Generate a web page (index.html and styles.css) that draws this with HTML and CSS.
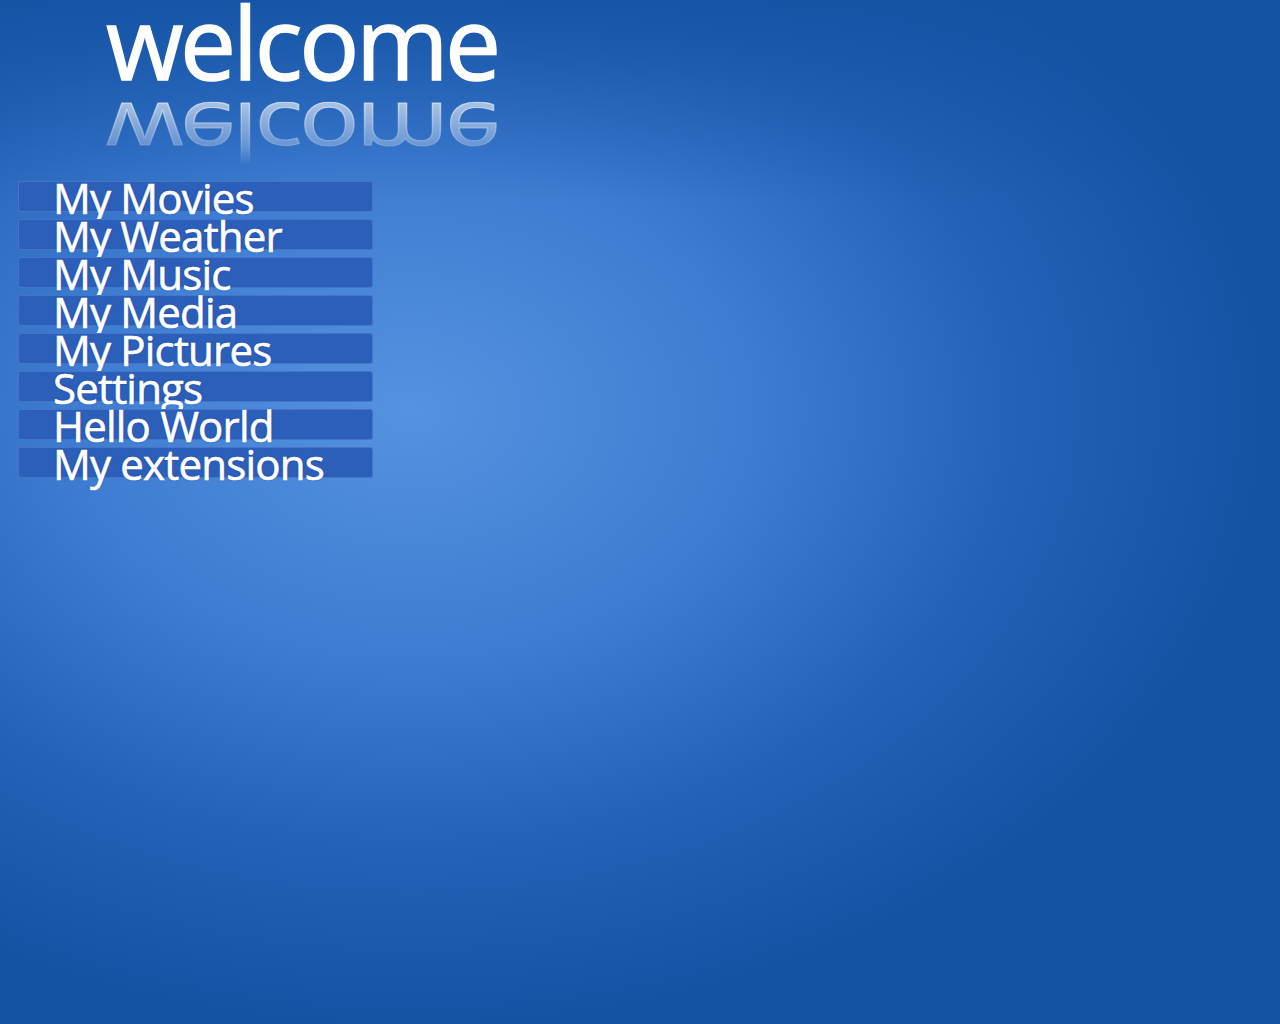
FILE: index.html
```html
<!DOCTYPE html>
<html>
<head>
<meta charset="utf-8">
<title>welcome</title>
<link rel="stylesheet" href="styles.css">
</head>
<body>
<div class="screen">
  <header class="title">
    <div class="welcome">welcome</div>
    <div class="reflection" aria-hidden="true">welcome</div>
  </header>
  <nav class="menu">
    <div class="item">My Movies</div>
    <div class="item">My Weather</div>
    <div class="item">My Music</div>
    <div class="item">My Media</div>
    <div class="item">My Pictures</div>
    <div class="item">Settings</div>
    <div class="item">Hello World</div>
    <div class="item">My extensions</div>
  </nav>
</div>
</body>
</html>
```
FILE: styles.css
```css
html, body {
  margin: 0;
  padding: 0;
}
body {
  font-family: "Open Sans", "Noto Sans", "DejaVu Sans", sans-serif;
  color: #fff;
}
.screen {
  width: 1280px;
  height: 1024px;
  overflow: hidden;
  background:
    linear-gradient(to bottom, rgba(20, 82, 164, 0.85) 0px, rgba(20, 82, 164, 0.4) 90px, rgba(20, 82, 164, 0) 200px),
    radial-gradient(ellipse 860px 620px at 410px 410px, #5592e0 0%, #3d7cd1 40%, #2462b8 70%, #1452a4 100%);
  display: flex;
  flex-direction: column;
}
.title {
  display: flex;
  flex-direction: column;
  padding-left: 106px;
  height: 181px;
}
.welcome {
  font-size: 100px;
  line-height: 82px;
  height: 82px;
  font-weight: 400;
  letter-spacing: -3.4px;
  white-space: nowrap;
  -webkit-text-stroke: 1.4px #fff;
}
.reflection {
  font-size: 100px;
  line-height: 82px;
  height: 82px;
  font-weight: 400;
  letter-spacing: -3.4px;
  white-space: nowrap;
  margin-top: -59px;
  transform-origin: 50% 80px;
  transform: scaleY(-0.78);
  color: rgba(255, 255, 255, 0.6);
  -webkit-text-stroke: 1.4px rgba(255, 255, 255, 0.6);
  -webkit-mask-image: linear-gradient(to bottom, rgba(0,0,0,0) 0px, rgba(0,0,0,0.45) 26px, rgba(0,0,0,1) 80px);
  mask-image: linear-gradient(to bottom, rgba(0,0,0,0) 0px, rgba(0,0,0,0.45) 26px, rgba(0,0,0,1) 80px);
}
.menu {
  display: flex;
  flex-direction: column;
  gap: 7px;
  padding-left: 18px;
}
.item {
  width: 355px;
  height: 31px;
  box-sizing: border-box;
  background: #2c5fba;
  border: 1px solid rgba(120, 160, 225, 0.35);
  border-radius: 3px;
  padding-left: 34px;
  font-size: 42px;
  font-weight: 400;
  line-height: 32px;
  white-space: nowrap;
  letter-spacing: -0.8px;
  -webkit-text-stroke: 0.6px #fff;
  text-shadow: 0 0 2px rgba(10, 40, 110, 0.6);
}
```
